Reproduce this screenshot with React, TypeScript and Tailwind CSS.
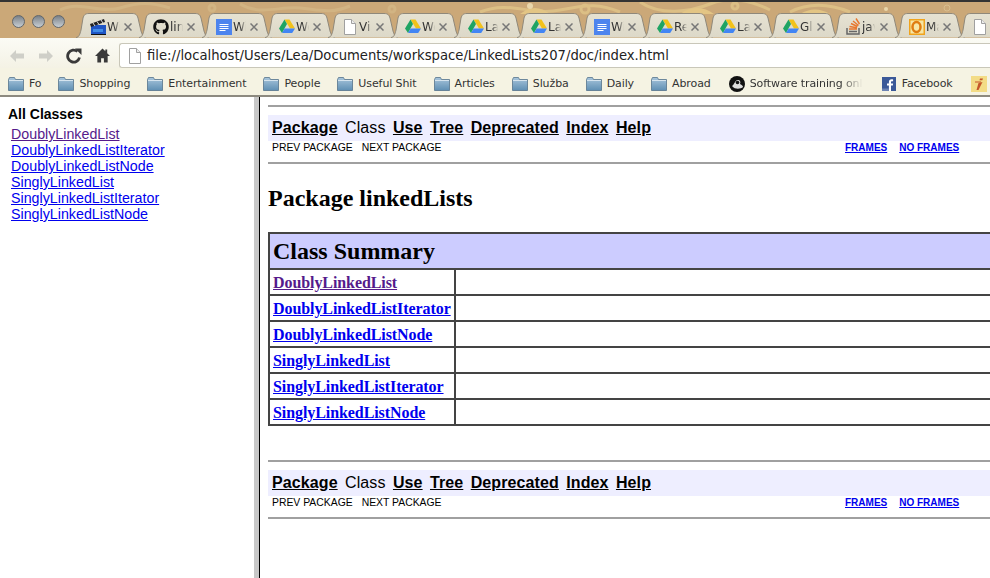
import React from "react";
import { FaGithub } from "react-icons/fa";

const Drive = () => (
  <svg width="16" height="15" viewBox="0 0 16 15" className="shrink-0">
    <polygon points="5.5,0.5 10.5,0.5 16,9.5 11,9.500" fill="#f2c21a" />
    <polygon points="5.5,0.5 8,5 3,14 0,9.5" fill="#1fa463" />
    <polygon points="3,14 5.7,9.5 16,9.5 13.2,14" fill="#4285f4" />
  </svg>
);
const Doc = () => (
  <svg width="16" height="16" viewBox="0 0 16 16" className="shrink-0">
    <rect width="16" height="16" fill="#4d84ee" />
    <path d="M3.500 5.500h9M3.500 7.500h9M3.500 9.500h9M3.500 11.500h6" stroke="#fff" strokeWidth="1" />
  </svg>
);
const Page = () => (
  <svg width="16" height="16" viewBox="0 0 16 16" className="shrink-0">
    <path d="M2.500.5h7l4 4v11h-11z" fill="#fff" stroke="#a0a0a0" />
    <path d="M9.500.5v4h4" fill="#eee" stroke="#a0a0a0" />
  </svg>
);
const Clapper = () => (
  <svg width="16" height="16" viewBox="0 0 16 16" className="shrink-0">
    <rect x="1" y="6" width="15" height="10" fill="#1f55c4" />
    <path d="M0 5 14 0l1 3L1 8z" fill="#222" />
    <path d="M3 4 5 7M7 2.500 9 5.500M11 1 13 4" stroke="#ddd" />
    <path d="M3 10h10v3H3z" fill="#3f8be8" />
    <path d="M1 15.500h15" stroke="#111" />
  </svg>
);
const Stack = () => (
  <svg width="15" height="17" viewBox="0 0 15 17" className="shrink-0">
    <path d="M1 10v6h12v-6" fill="none" stroke="#666" strokeWidth="1.500" />
    <path d="M3 13.500h8" stroke="#666" strokeWidth="1.500" />
    <path d="M3 11h8M3.500 8.500l7.500 1.200M5 5.500l6.500 3M7 3l5.500 4.500M10 .5l3.500 5.500" stroke="#e8772e" strokeWidth="1.400" />
  </svg>
);
const Outlook = () => (
  <svg width="16" height="16" viewBox="0 0 16 16" className="shrink-0">
    <rect x="0.750" y="0.750" width="14.500" height="14.500" fill="#f7e6a5" stroke="#f0a31c" strokeWidth="1.500" />
    <ellipse cx="7.500" cy="8" rx="4" ry="5" fill="none" stroke="#e07d10" strokeWidth="2.500" />
  </svg>
);
const Folder = () => (
  <svg width="16" height="14" viewBox="0 0 16 14" className="shrink-0">
    <defs>
      <linearGradient id="fg" x1="0" y1="0" x2="0" y2="1">
        <stop offset="0" stopColor="#a9c6dc" />
        <stop offset="1" stopColor="#5f8fb3" />
      </linearGradient>
    </defs>
    <path d="M.5 2.500 1.500.5h5l1 2h8v11H.5z" fill="url(#fg)" stroke="#56748c" strokeWidth=".8" />
    <path d="M1 3.500h14" stroke="#d6e4ee" />
  </svg>
);
const Ball = () => (
  <svg width="16" height="16" viewBox="0 0 16 16" className="shrink-0">
    <circle cx="8" cy="8" r="8" fill="#111" />
    <path d="M3 10c2-1 3-6 6-6 2 0 3 2 2 4 2 1 3 2 3 3-2 2-8 3-11-1z" fill="#ddd" />
    <circle cx="8.500" cy="6.500" r="1.800" fill="#111" />
  </svg>
);
const Fb = () => (
  <svg width="14" height="14" viewBox="0 0 14 14" className="shrink-0">
    <rect width="14" height="14" fill="#3b5998" />
    <path d="M9 14V8.500h1.800l.3-2H9V5.200c0-.6.200-1 1-1h1.100V2.400C10.800 2.300 10.200 2.300 9.600 2.300 8 2.300 6.900 3.200 6.900 5v1.500H5v2h1.900V14z" fill="#fff" />
    <rect y="11.500" width="6.900" height="2.500" fill="#6d84b4" />
  </svg>
);
const Ii = () => (
  <svg width="16" height="16" viewBox="0 0 16 16" className="shrink-0">
    <rect width="16" height="16" fill="#f3dc86" />
    <path d="M7.500 7 5.500 14h2l4-8zM9 2.500h3l-.7 1.800H8.500z" fill="#c4562a" />
    <path d="M4 6h6" stroke="#c4562a" />
  </svg>
);

const tabs: [React.ReactNode, string][] = [
  [<Clapper />, "Wi"],
  [<FaGithub size={16} className="shrink-0 text-[#111]" />, "lin"],
  [<Doc />, "Wi"],
  [<Drive />, "Wo"],
  [<Page />, "Vi"],
  [<Drive />, "Wo"],
  [<Drive />, "La"],
  [<Drive />, "La"],
  [<Doc />, "Wi"],
  [<Drive />, "Re"],
  [<Drive />, "La"],
  [<Drive />, "Gl"],
  [<Stack />, "jav"],
  [<Outlook />, "Ma"],
  [<Page />, ""],
];

function Tab({ icon, title }: { icon: React.ReactNode; title: string }) {
  return (
    <div className="relative w-[63px] h-[24px] shrink-0 flex items-center pl-[14px] pt-[3px]">
      <svg width="72" height="25" viewBox="0 0 72 25" className="absolute left-0 top-0">
        <defs>
          <linearGradient id="tb" x1="0" y1="0" x2="0" y2="1">
            <stop offset="0" stopColor="#e6e2d2" />
            <stop offset="1" stopColor="#dcd8c8" />
          </linearGradient>
        </defs>
        <path d="M0 24.500C3 24.500 4 21 5 17L7 5C8 2 9 .5 13 .5H56C60 .5 61 2 62 5L65 18C66 21 67 24.500 70 24.500" fill="url(#tb)" stroke="#8f887a" />
      </svg>
      <span className="relative flex items-center gap-[1px]">
        {icon}
        <span className="w-[13px] overflow-hidden whitespace-nowrap text-[12px] text-[#333] font-['DejaVu_Sans',sans-serif] [mask-image:linear-gradient(90deg,#000_55%,transparent)]">{title}</span>
      </span>
      <svg width="8" height="8" viewBox="0 0 8 8" className="absolute left-[48px] top-[10px]">
        <path d="M.5.5l7 7M7.500.5l-7 7" stroke="#777" strokeWidth="1.500" />
      </svg>
    </div>
  );
}

const bookmarks = ["Fo", "Shopping", "Entertainment", "People", "Useful Shit", "Articles", "Služba", "Daily", "Abroad"];

function Nav() {
  const link = "underline font-bold text-black";
  return (
    <>
      <hr className="border-0 h-[2px] bg-[#a0a0a0]" />
      <div className="mt-[8px] h-[26px] bg-[#eeeeff] flex items-center pl-[4px] gap-[7.4px] text-[16px] tracking-[0.1px] font-['Liberation_Sans',sans-serif] text-black">
        <span className={link}>Package</span>
        <span>Class</span>
        <span className={link}>Use</span>
        <span className={link}>Tree</span>
        <span className={link}>Deprecated</span>
        <span className={link}>Index</span>
        <span className={link}>Help</span>
      </div>
      <div className="relative h-[14px] pl-[4px] flex gap-[9px] text-[10.4px] leading-[14px] font-['Liberation_Sans',sans-serif] text-black">
        <span>PREV PACKAGE</span>
        <span>NEXT PACKAGE</span>
        <span className="absolute left-[577px] top-0 text-[10px] font-bold underline text-[#0000ee] whitespace-nowrap flex gap-[12px]">
          <span>FRAMES</span>
          <span>NO FRAMES</span>
        </span>
      </div>
      <hr className="border-0 h-[2px] bg-[#a0a0a0] mt-[7px]" />
    </>
  );
}

const classes = [
  "DoublyLinkedList",
  "DoublyLinkedListIterator",
  "DoublyLinkedListNode",
  "SinglyLinkedList",
  "SinglyLinkedListIterator",
  "SinglyLinkedListNode",
];

export default function App() {
  return (
    <div className="w-[990px] h-[578px] overflow-hidden flex flex-col bg-white">
      <div className="h-[38px] shrink-0 bg-[#cba878] border-t-2 border-[#333] relative overflow-hidden flex">
        <svg width="990" height="36" viewBox="0 0 990 36" className="absolute left-0 top-0" fill="none">
          <g stroke="#d2b483" strokeWidth="3">
            <path d="M60 8c20-10 40 4 60-2s30-6 50 0M240 2c20 12 40 2 60 4s30 6 50-2" />
            <circle cx="212" cy="6" r="3" />
            <circle cx="392" cy="7" r="3" />
          </g>
          <g stroke="#dcbf85" strokeWidth="3">
            <path d="M480 10c30-12 50 4 80-2s40-6 60 2M640 0c20 14 50 10 70 2s40-4 60 6M790 10c20-10 40-8 60 0" />
            <circle cx="585" cy="7" r="4" />
            <circle cx="735" cy="4" r="3" />
          </g>
          <path d="M520 12c10-8 20-8 30 0zM680 12c10-8 24-8 34 0zM800 12c10-6 20-6 30 0z" fill="#e3c584" />
          <circle cx="530" cy="4" r="3" fill="#e9d6ab" />
          <circle cx="886" cy="7" r="2" fill="#e9d6ab" />
          <circle cx="947" cy="6" r="3" stroke="#d8bd8e" />
        </svg>
        <div className="relative flex items-center gap-[7px] pl-[12px] pt-[13px] w-[76px] shrink-0 self-start">
          {[0, 1, 2].map((i) => (
            <span key={i} className="w-[13px] h-[13px] rounded-full border border-[#5f666c] bg-[linear-gradient(180deg,#7b8188,#c7ced3)]" />
          ))}
        </div>
        <div className="relative flex pt-[11px]">
          {tabs.map(([icon, title], i) => (
            <Tab key={i} icon={icon} title={title} />
          ))}
        </div>
      </div>
      <div className="h-[30px] shrink-0 bg-[linear-gradient(180deg,#fbfbf5,#f4f2e5)] flex items-center pt-[5px]">
        <div className="w-[119px] shrink-0 flex items-center pl-[9px]">
          <svg width="16" height="14" viewBox="0 0 16 14" className="mr-[13px]"><path d="M7 1 1 7l6 6V9.500h8v-5H7z" fill="#cfcfc8" /></svg>
          <svg width="16" height="14" viewBox="0 0 16 14" className="mr-[12px]"><path d="M9 1l6 6-6 6V9.500H1v-5h8z" fill="#cfcfc8" /></svg>
          <svg width="16" height="16" viewBox="0 0 16 16" className="mr-[13px]"><path d="M13.500 9.500A6 6 0 1 1 11.500 3.500" fill="none" stroke="#3a3a3a" strokeWidth="2.800" /><path d="M9 .5h6.500v6.500z" fill="#3a3a3a" /></svg>
          <svg width="15" height="15" viewBox="0 0 16 15"><path d="M8 0 0 8h2.500v7H6.500v-4.500h3V15H13.500V8H16l-3-3V1h-2v2z" fill="#3a3a3a" /></svg>
        </div>
        <div className="flex-1 h-[25px] bg-white border border-[#c9c7b9] border-r-0 rounded-l-[3px] flex items-center pl-[7px] gap-[4px] text-[13.2px] text-[#222] font-['DejaVu_Sans',sans-serif] whitespace-nowrap">
          <Page />
          <span>file://localhost/Users/Lea/Documents/workspace/LinkedLists207/doc/index.html</span>
        </div>
      </div>
      <div className="h-[29px] shrink-0 bg-[#f5f3e3] border-b-2 border-[#8d8a80] flex items-center pl-[8px] pt-[5px] text-[11px] tracking-[-0.1px] text-[#333] font-['DejaVu_Sans',sans-serif] whitespace-nowrap overflow-hidden">
        {bookmarks.map((t) => (
          <span key={t} className="flex items-center gap-[5px] mr-[17px] shrink-0">
            <Folder />
            {t}
          </span>
        ))}
        <span className="flex items-center gap-[5px] w-[153px] ml-[1px] shrink-0">
          <Ball />
          <span className="w-[113px] overflow-hidden [mask-image:linear-gradient(90deg,#000_80%,transparent)]">Software training online</span>
        </span>
        <span className="flex items-center gap-[6px] w-[89px] shrink-0">
          <Fb />
          Facebook
        </span>
        <Ii />
      </div>
      <div className="flex-1 flex min-h-0">
        <div className="w-[254px] shrink-0 pl-[8px] pt-[9px] font-['Liberation_Sans',sans-serif]">
          <div className="font-bold text-[14px] leading-[16px] text-black">All Classes</div>
          <div className="pl-[3px] mt-[4px] text-[14.25px] leading-[16px]">
            {classes.map((c, i) => (
              <div key={c}>
                <span className={`underline ${i === 0 ? "text-[#551a8b]" : "text-[#0000ee]"}`}>{c}</span>
              </div>
            ))}
          </div>
        </div>
        <div className="w-[5px] shrink-0 bg-[#c8c8c8]" />
        <div className="w-[1px] shrink-0 bg-black" />
        <div className="flex-1 min-w-0 pl-[8px] pt-[8px] overflow-hidden">
          <Nav />
          <h2 className="mt-[20px] text-[24px] leading-[28px] font-bold font-['Liberation_Serif',serif] text-black whitespace-nowrap">Package linkedLists</h2>
          <div className="mt-[20px] w-[760px] border-2 border-[#444] font-['Liberation_Serif',serif]">
            <div className="h-[36px] bg-[#ccccff] border-b-2 border-[#444] pl-[3px] text-[24px] leading-[34px] font-bold text-black">Class Summary</div>
            {classes.map((c, i) => (
              <div key={c} className={`flex ${i < 5 ? "h-[26px] border-b-2 border-[#444]" : "h-[24px]"}`}>
                <div className="w-[186px] shrink-0 border-r-2 border-[#444] pl-[3px] text-[16px] tracking-[-0.08px] leading-[26px] font-bold">
                  <span className={`underline ${i === 0 ? "text-[#551a8b]" : "text-[#0000ee]"}`}>{c}</span>
                </div>
              </div>
            ))}
          </div>
          <div className="mt-[34px]">
            <Nav />
          </div>
        </div>
      </div>
    </div>
  );
}
